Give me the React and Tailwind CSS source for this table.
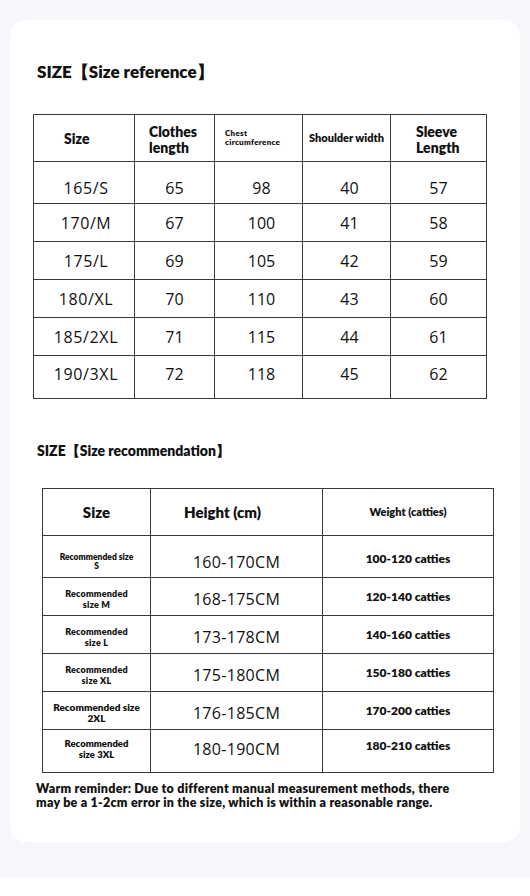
import React from "react";

const sizeRows = [
  { size: "165/S", len: 65, chest: 98, shoulder: 40, sleeve: 57, h: "h-[42px]", pad: "pt-[10px]" },
  { size: "170/M", len: 67, chest: 100, shoulder: 41, sleeve: 58, h: "h-[38px]", pad: "pt-[1px]" },
  { size: "175/L", len: 69, chest: 105, shoulder: 42, sleeve: 59, h: "h-[38px]", pad: "pt-[1px]" },
  { size: "180/XL", len: 70, chest: 110, shoulder: 43, sleeve: 60, h: "h-[38px]", pad: "pt-[1px]" },
  { size: "185/2XL", len: 71, chest: 115, shoulder: 44, sleeve: 61, h: "h-[38px]", pad: "pt-[1px]" },
  { size: "190/3XL", len: 72, chest: 118, shoulder: 45, sleeve: 62, h: "h-[43px]", pad: "pb-[6px]" },
];

const recRows = [
  { lines: ["Recommended size", "S"], text: "text-[8.5px] leading-[9px]", height: "160-170CM", weight: "100-120 catties", h: "h-[42px]", pad: "pt-[10px]", wpad: "pt-[4px]" },
  { lines: ["Recommended", "size M"], text: "text-[9px] leading-[11px] tracking-[0.2px]", height: "168-175CM", weight: "120-140 catties", h: "h-[38px]", pad: "pt-[4px]", wpad: "" },
  { lines: ["Recommended", "size L"], text: "text-[9px] leading-[11px] tracking-[0.2px]", height: "173-178CM", weight: "140-160 catties", h: "h-[38px]", pad: "pt-[4px]", wpad: "" },
  { lines: ["Recommended", "size XL"], text: "text-[9px] leading-[11px] tracking-[0.2px]", height: "175-180CM", weight: "150-180 catties", h: "h-[38px]", pad: "pt-[4px]", wpad: "" },
  { lines: ["Recommended size", "2XL"], text: "text-[10px] leading-[11px]", height: "176-185CM", weight: "170-200 catties", h: "h-[38px]", pad: "pt-[4px]", wpad: "" },
  { lines: ["Recommended", "size 3XL"], text: "text-[9.5px] leading-[11px]", height: "180-190CM", weight: "180-210 catties", h: "h-[43px]", pad: "pb-[4px]", wpad: "pb-[10px]" },
];

const head = "font-['Lato',sans-serif] font-extrabold text-[#111]";
const num = "font-['Open_Sans',sans-serif] text-[16px] text-[#111] text-center";
const cell = "border-[1.5px] border-[#3a3a3a] p-0 align-middle";

export default function App() {
  return (
    <div className="w-[530px] h-[896px] bg-[#f6f7fb] flex flex-col pt-[20px]">
      <div className="mx-[10px] h-[822px] bg-white rounded-[16px] flex flex-col">
        <h1 className={`${head} text-[17px] leading-[24px] ml-[27px] mt-[40px] font-['Lato','Noto_Sans_CJK_SC',sans-serif]`}>
          SIZE【Size reference】
        </h1>

        <table className="ml-[23px] mt-[30px] w-[453px] table-fixed border-collapse">
          <colgroup>
            <col className="w-[101px]" />
            <col className="w-[80px]" />
            <col className="w-[88px]" />
            <col className="w-[88px]" />
            <col className="w-[96px]" />
          </colgroup>
          <thead>
            <tr className="h-[47px]">
              <th className={`${cell} ${head} text-[14px] text-left pl-[30px]`}>Size</th>
              <th className={`${cell} ${head} text-[14px] leading-[16px] text-left pl-[14px] pt-[4px]`}>
                Clothes
                <br />
                length
              </th>
              <th className={`${cell} ${head} text-[8px] leading-[9px] text-left pl-[10px] tracking-[0.3px]`}>
                Chest
                <br />
                circumference
              </th>
              <th className={`${cell} ${head} text-[11px] text-center whitespace-nowrap`}>Shoulder width</th>
              <th className={`${cell} ${head} text-[14px] leading-[16px] text-left pl-[25px] pt-[4px]`}>
                Sleeve
                <br />
                Length
              </th>
            </tr>
          </thead>
          <tbody>
            {sizeRows.map((r) => (
              <tr key={r.size} className={r.h}>
                <td className={`${cell} ${num} ${r.pad} tracking-[0.6px] pl-[4px]`}>{r.size}</td>
                <td className={`${cell} ${num} ${r.pad}`}>{r.len}</td>
                <td className={`${cell} ${num} ${r.pad} pl-[6px]`}>{r.chest}</td>
                <td className={`${cell} ${num} ${r.pad} pl-[6px]`}>{r.shoulder}</td>
                <td className={`${cell} ${num} ${r.pad}`}>{r.sleeve}</td>
              </tr>
            ))}
          </tbody>
        </table>

        <h2 className={`${head} text-[14px] leading-[20px] ml-[27px] mt-[42px] font-['Lato','Noto_Sans_CJK_SC',sans-serif]`}>
          SIZE【Size recommendation】
        </h2>

        <table className="ml-[32px] mt-[27px] w-[451px] table-fixed border-collapse">
          <colgroup>
            <col className="w-[108px]" />
            <col className="w-[172px]" />
            <col className="w-[171px]" />
          </colgroup>
          <thead>
            <tr className="h-[47px]">
              <th className={`${cell} ${head} text-[15px] text-center`}>Size</th>
              <th className={`${cell} ${head} text-[15px] text-left pl-[33px]`}>Height (cm)</th>
              <th className={`${cell} ${head} text-[11px] text-center`}>Weight (catties)</th>
            </tr>
          </thead>
          <tbody>
            {recRows.map((r) => (
              <tr key={r.height} className={r.h}>
                <td className={`${cell} ${head} ${r.text} ${r.pad} text-center`}>
                  {r.lines[0]}
                  <br />
                  {r.lines[1]}
                </td>
                <td className={`${cell} ${num} ${r.pad} tracking-[0.3px]`}>{r.height}</td>
                <td className={`${cell} ${head} text-[12px] text-center ${r.wpad}`}>{r.weight}</td>
              </tr>
            ))}
          </tbody>
        </table>

        <p className={`${head} text-[12.5px] leading-[14px] tracking-[0.25px] ml-[26px] mt-[9px]`}>
          Warm reminder: Due to different manual measurement methods, there
          <br />
          may be a 1-2cm error in the size, which is within a reasonable range.
        </p>
      </div>
      <div className="mt-[35px] flex-1 bg-white" />
    </div>
  );
}
